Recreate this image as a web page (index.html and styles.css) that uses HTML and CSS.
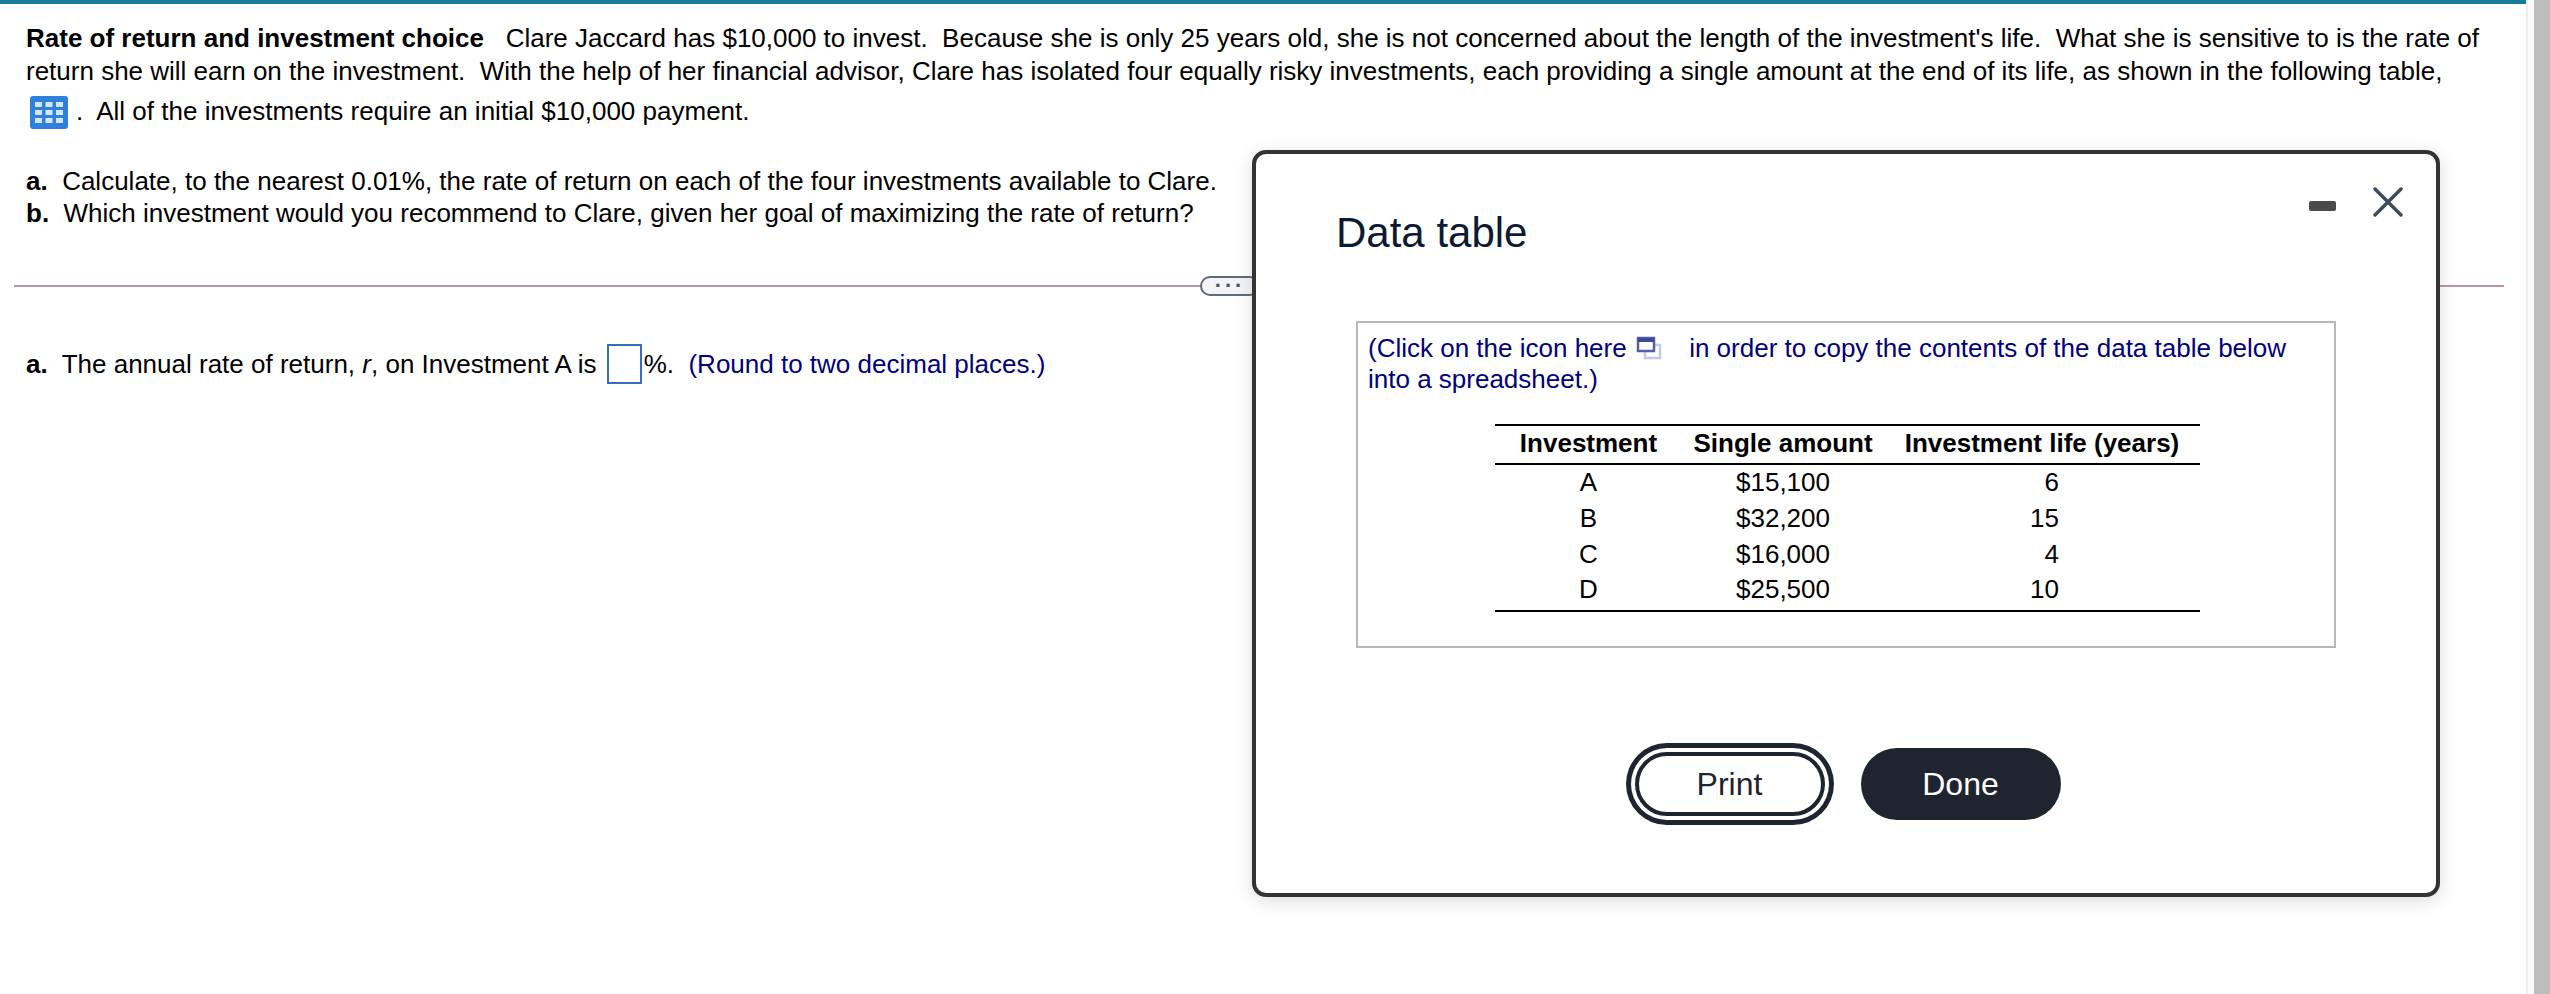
FILE: index.html
```html
<!DOCTYPE html>
<html lang="en">

<head>
    <meta charset="UTF-8">
    <meta name="viewport" content="width=device-width, initial-scale=1.0">
    <title>Rate of return and investment choice</title>
    <link rel="stylesheet" href="styles.css">
</head>

<body>
    <div class="page">
        <div class="question">
            <p class="intro"><b>Rate of return and investment choice</b>&nbsp;&nbsp; Clare Jaccard has $10,000 to invest.&nbsp; Because she is only 25 years old, she is not concerned about the length of the investment's life.&nbsp; What she is sensitive to is the rate of<br>return she will earn on the investment.&nbsp; With the help of her financial advisor, Clare has isolated four equally risky investments, each providing a single amount at the end of its life, as shown in the following table,</p>
            <p class="intro-last">
                <svg class="grid-icon" width="38" height="33" viewBox="0 0 38 33">
                    <rect width="38" height="33" rx="3" fill="#2f7fdc"/>
                    <g fill="#d5e5f9">
                        <rect x="5" y="6" width="7" height="5"/><rect x="15.500" y="6" width="7" height="5"/><rect x="26" y="6" width="7" height="5"/>
                        <rect x="5" y="14" width="7" height="5"/><rect x="15.500" y="14" width="7" height="5"/><rect x="26" y="14" width="7" height="5"/>
                        <rect x="5" y="22" width="7" height="5"/><rect x="15.500" y="22" width="7" height="5"/><rect x="26" y="22" width="7" height="5"/>
                    </g>
                </svg>
                <span>.&nbsp; All of the investments require an initial $10,000 payment.</span>
            </p>
            <ul class="parts">
                <li><b>a.</b>&nbsp; Calculate, to the nearest 0.01%, the rate of return on each of the four investments available to Clare.</li>
                <li><b>b.</b>&nbsp; Which investment would you recommend to Clare, given her goal of maximizing the rate of return?</li>
            </ul>
        </div>

        <div class="divider">
            <div class="more-btn">...</div>
        </div>

        <p class="answer"><b>a.</b>&nbsp; The annual rate of return, <i>r</i>, on Investment A is <span class="answer-box"></span>%.&nbsp; <span class="hint">(Round to two decimal places.)</span></p>

        <!-- Janela do data table -->
        <div class="modal">
            <div class="modal-top">
                <h1>Data table</h1>
                <div class="modal-controls">
                    <div class="minimize"></div>
                    <svg width="30" height="30" viewBox="0 0 30 30">
                        <path d="M2 2 L28 28 M28 2 L2 28" stroke="#3e4c5a" stroke-width="3.500" stroke-linecap="round" fill="none"/>
                    </svg>
                </div>
            </div>

            <div class="data-box">
                <p class="data-note">(Click on the icon here
                    <svg class="copy-icon" width="26" height="24" viewBox="0 0 26 24">
                        <rect x="9" y="9" width="15" height="13" fill="none" stroke="#c3c8e6" stroke-width="2.500"/>
                        <rect x="2" y="2" width="16" height="13" fill="#fff" stroke="#5560ad" stroke-width="2.500"/>
                        <rect x="2" y="2" width="16" height="4" fill="#3d4a9c"/>
                    </svg>
                    in order to copy the contents of the data table below<br>into a spreadsheet.)</p>
                <table class="data-table">
                    <thead>
                        <tr><th>Investment</th><th>Single amount</th><th>Investment life (years)</th></tr>
                    </thead>
                    <tbody>
                        <tr><td>A</td><td>$15,100</td><td class="years">6</td></tr>
                        <tr><td>B</td><td>$32,200</td><td class="years">15</td></tr>
                        <tr><td>C</td><td>$16,000</td><td class="years">4</td></tr>
                        <tr class="last-row"><td>D</td><td>$25,500</td><td class="years">10</td></tr>
                    </tbody>
                </table>
            </div>

            <div class="modal-actions">
                <button class="btn btn-print">Print</button>
                <button class="btn btn-done">Done</button>
            </div>
        </div>
    </div>

    <div class="scrollbar">
        <div class="scroll-thumb"></div>
    </div>
</body>

</html>
```

FILE: styles.css
```css
* {
    padding: 0;
    margin: 0;
    box-sizing: border-box;
}

body {
    display: flex;
    width: 2550px;
    height: 994px;
    overflow: hidden;
    background-color: #fff;
    color: #000;
    font-family: "Liberation Sans", Arial, sans-serif;
    font-size: 26px;
}

/* Area principal */
.page {
    flex: 1;
    position: relative;
    border-top: 4px solid #17799b;
}

.question {
    padding: 18px 0 0 26px;
}

.intro {
    line-height: 33px;
}

.intro-last {
    display: flex;
    align-items: center;
    margin-top: 6px;
    height: 34px;
}

.grid-icon {
    margin: 2px 6px 0 4px;
}

.intro-last span {
    margin-left: 2px;
}

.parts {
    list-style: none;
    margin-top: 37px;
    line-height: 32px;
}

.divider {
    position: relative;
    height: 2px;
    margin: 56px 0 0 14px;
    width: 2490px;
    background-color: #b896a8;
}

.more-btn {
    position: absolute;
    left: 1186px;
    top: -9px;
    width: 60px;
    height: 20px;
    border: 2px solid #5d6b7a;
    border-radius: 10px;
    background-color: #f2f4f7;
    color: #4a5560;
    font-size: 22px;
    line-height: 4px;
    font-weight: bold;
    text-align: center;
    letter-spacing: 4px;
}

.answer {
    display: flex;
    align-items: center;
    white-space: pre-wrap;
    margin: 56px 0 0 26px;
    height: 42px;
}

.answer-box {
    width: 35px;
    height: 40px;
    margin: 0 2px 0 3px;
    border: 2px solid #3a6bc4;
}

.hint {
    color: #000080;
}

/* Modal */
.modal {
    position: absolute;
    left: 1252px;
    top: 146px;
    width: 1188px;
    height: 747px;
    padding: 0 0 0 80px;
    border: 4px solid #333;
    border-radius: 14px;
    background-color: #fff;
    box-shadow: 0 4px 18px rgba(0, 0, 0, 0.14);
}

.modal-top {
    position: relative;
    height: 167px;
}

.modal h1 {
    padding-top: 54px;
    font-size: 42px;
    line-height: 50px;
    font-weight: normal;
    color: #0c1a33;
}

.modal-controls {
    position: absolute;
    top: 33px;
    right: 33px;
    display: flex;
    align-items: center;
    gap: 37px;
}

.minimize {
    width: 27px;
    height: 10px;
    margin-top: 8px;
    border-radius: 2px;
    background-color: #4a4a4a;
}

.data-box {
    width: 980px;
    height: 327px;
    margin-left: 20px;
    padding: 10px 10px 0 10px;
    border: 2px solid #b8b8b8;
}

.data-note {
    color: #000080;
    line-height: 31px;
}

.copy-icon {
    margin: 0 20px 0 2px;
    vertical-align: -3px;
}

.data-table {
    width: 705px;
    margin: 29px 0 0 127px;
    border-collapse: collapse;
    border-top: 2px solid #000;
    border-bottom: 2px solid #000;
    text-align: center;
}

.data-table th {
    height: 39px;
    padding-bottom: 2px;
    border-bottom: 2px solid #000;
    font-weight: bold;
}

.data-table th:nth-child(1) {
    width: 187px;
}

.data-table th:nth-child(2) {
    width: 202px;
}

.data-table td {
    height: 36px;
}

.data-table .last-row td {
    height: 39px;
    padding-bottom: 3px;
}

.data-table .years {
    padding-right: 141px;
    text-align: right;
}

.modal-actions {
    display: flex;
    align-items: center;
    justify-content: center;
    gap: 36px;
    height: 72px;
    margin: 100px 0 0 -77px;
}

.btn {
    border-radius: 36px;
    font-family: "Liberation Sans", Arial, sans-serif;
    font-size: 32px;
}

.btn-print {
    width: 190px;
    height: 64px;
    border: 4px solid #1e2530;
    background-color: #fff;
    color: #1e2530;
    box-shadow: 0 0 0 4px #fff, 0 0 0 9px #1e2530;
}

.btn-done {
    width: 200px;
    height: 72px;
    border: 0;
    background-color: #1e2530;
    color: #fff;
}

/* Barra de rolagem */
.scrollbar {
    display: flex;
    width: 24px;
    border-left: 2px solid #ececec;
    background-color: #fafafa;
}

.scroll-thumb {
    width: 16px;
    margin-left: 6px;
    background-color: #bdbdbd;
}
```
